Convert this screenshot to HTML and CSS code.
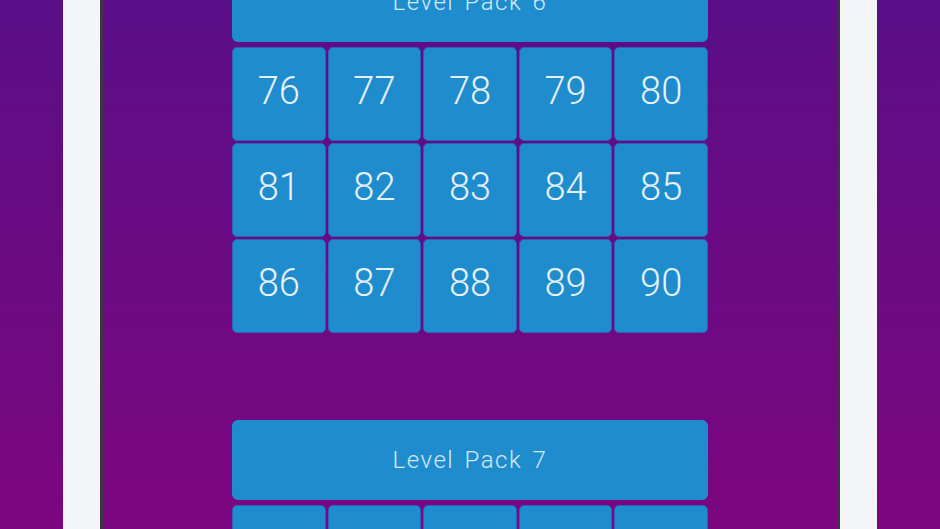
FILE: index.html
```html
<!DOCTYPE html>
<html lang="en">

<head>
  <meta charset="UTF-8" />
  <meta name="viewport" content="width=device-width, initial-scale=1.0" />
  <title>Level Packs</title>
  <link rel="stylesheet" href="styles.css">
</head>

<body>
  <div class="screen">
    <div class="side"></div>
    <div class="rail"></div>
    <div class="board">
      <div class="packs">
        <section class="pack">
          <div class="pack-title">Level Pack 6</div>
          <div class="levels">
            <button class="level">76</button>
            <button class="level">77</button>
            <button class="level">78</button>
            <button class="level">79</button>
            <button class="level">80</button>
            <button class="level">81</button>
            <button class="level">82</button>
            <button class="level">83</button>
            <button class="level">84</button>
            <button class="level">85</button>
            <button class="level">86</button>
            <button class="level">87</button>
            <button class="level">88</button>
            <button class="level">89</button>
            <button class="level">90</button>
          </div>
        </section>
        <section class="pack">
          <div class="pack-title">Level Pack 7</div>
          <div class="levels">
            <button class="level"></button>
            <button class="level"></button>
            <button class="level"></button>
            <button class="level"></button>
            <button class="level"></button>
          </div>
        </section>
      </div>
    </div>
    <div class="rail rail-right"></div>
    <div class="side"></div>
  </div>
</body>

</html>
```

FILE: styles.css
```css
html,
body {
  margin: 0;
  height: 100%;
  overflow: hidden;
}

body {
  background: linear-gradient(#5a0e87, #7c067f);
  font-family: Roboto, 'Open Sans', sans-serif;
}

.screen {
  display: flex;
  height: 529px;
}

.side {
  width: 63px;
  flex: none;
}

.rail {
  width: 37px;
  flex: none;
  background-color: #f4f5f7;
  border-right: 3px solid #3b3740;
}

.rail-right {
  border-right: none;
  border-left: 3px solid #3b3740;
}

.board {
  flex: 1;
  display: flex;
  justify-content: center;
  overflow: hidden;
}

.packs {
  width: 476px;
  margin-top: -38px;
  display: flex;
  flex-direction: column;
  gap: 87px;
}

.pack-title {
  height: 80px;
  display: flex;
  align-items: center;
  justify-content: center;
  background-color: #1f8dcd;
  border-radius: 6px;
  color: #d3e9f7;
  font-size: 24px;
  font-weight: 300;
  letter-spacing: 1.5px;
  word-spacing: 3px;
}

.levels {
  margin-top: 5px;
  display: grid;
  grid-template-columns: repeat(5, 1fr);
  grid-auto-rows: 94px;
  gap: 2px;
}

.level {
  border: 1px solid #2f5fb6;
  border-radius: 5px;
  background-color: #1f8dcd;
  color: #e6f1fb;
  font-family: inherit;
  font-size: 38px;
  font-weight: 300;
  padding: 0 0 6px;
}
```
